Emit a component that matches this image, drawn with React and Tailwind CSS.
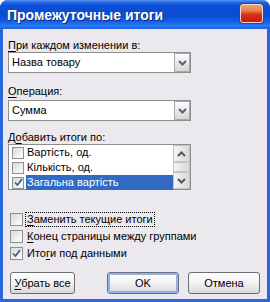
import React from 'react';

const Key = ({ children }) => <span className="underline underline-offset-[2px] decoration-1">{children}</span>;

const Check = () => (
  <svg width="9" height="9" viewBox="0 0 9 9" className="block">
    <path d="M1 4.5 L3.5 7 L8 1" fill="none" stroke="#3d5a94" strokeWidth="1.7" />
  </svg>
);

const Box = ({ checked, small }) => (
  <div
    className={`${small ? 'w-[12px] h-[12px]' : 'w-[13px] h-[13px]'} shrink-0 border border-[#8f8f8f] bg-gradient-to-br from-[#d9d9d9] to-white flex items-center justify-center`}
  >
    {checked && <Check />}
  </div>
);

const Chevron = ({ up, color = '#4d6185' }) => (
  <svg width="9" height="6" viewBox="0 0 9 6" className="block">
    <path d={up ? 'M1 5 L4.5 1.5 L8 5' : 'M1 1 L4.5 4.5 L8 1'} fill="none" stroke={color} strokeWidth="2" />
  </svg>
);

const Combo = ({ value }) => (
  <div className="w-[183px] h-[21px] border border-[#8e8e8e] bg-white flex items-center">
    <span className="flex-1 pl-[3px] leading-[13px]">{value}</span>
    <div className="w-[16px] h-[19px] border border-[#a8a8a8] bg-gradient-to-b from-white to-[#d6d6d6] flex items-center justify-center">
      <Chevron />
    </div>
  </div>
);

const rows = [
  { label: 'Вартість, од.', checked: false },
  { label: 'Кількість, од.', checked: false },
  { label: 'Загальна вартість', checked: true, selected: true },
];

const Button = ({ children, primary, className = '' }) => (
  <div
    className={`h-[22px] rounded-[3px] border border-[#6e6e6e] bg-gradient-to-b from-white via-[#f2f2f2] to-[#d8d8d8] flex items-center justify-center ${className}`}
  >
    <div
      className={`w-full h-full rounded-[2px] flex items-center justify-center ${primary ? 'border-2 border-[#8fb1ec]' : ''}`}
    >
      {children}
    </div>
  </div>
);

export default function App() {
  return (
    <div className="w-[270px] h-[302px] bg-white font-['Liberation_Sans',Arial,sans-serif] text-[11px] text-black">
      <div className="w-full h-full rounded-t-[8px] overflow-hidden flex flex-col bg-[#2c66dd]">
        {/* Title bar */}
        <div className="h-[29px] shrink-0 flex items-center pl-[7px] pr-[7px] bg-[linear-gradient(to_bottom,#5b95f0_0%,#2567e6_8%,#0a4ed6_20%,#0a4dd4_55%,#1560e6_75%,#2a7af2_88%,#1d62e2_100%)]">
          <span className="flex-1 text-white font-bold text-[14px] leading-[16px] [text-shadow:1px_1px_0_#0a2a80]">
            Промежуточные итоги
          </span>
          <div className="w-[23px] h-[19px] -mt-[2px] rounded-[3px] border border-[#f0d8d0] bg-[linear-gradient(to_bottom,#f0a070_0%,#e8804a_35%,#d8301a_55%,#cc1a08_100%)] shadow-[0_0_0_1px_#6b3a2a]" />
        </div>

        {/* Client area */}
        <div className="flex-1 mx-[3px] mb-[3px] bg-[#ebe9ed] flex flex-col pt-[10px]">
          <div className="pl-[5px]">
            <div className="h-[13px] leading-[13px]">
              <Key>П</Key>ри каждом изменении в:
            </div>
            <Combo value="Назва товару" />

            <div className="h-[13px] leading-[13px] mt-[12px]">
              <Key>О</Key>перация:
            </div>
            <div className="mt-[2px]">
              <Combo value="Сумма" />
            </div>

            <div className="h-[13px] leading-[13px] mt-[10px]">
              Д<Key>о</Key>бавить итоги по:
            </div>
            <div className="w-[183px] h-[46px] border border-[#8e8e8e] bg-white flex">
              <div className="flex-1 flex flex-col">
                {rows.map((r) => (
                  <div key={r.label} className="h-[15px] flex items-center pl-[3px]">
                    <Box checked={r.checked} small />
                    <span
                      className={`ml-[2px] pl-[1px] pr-[1px] h-[15px] leading-[15px] ${r.selected ? 'flex-1 bg-[#316ac5] text-white' : ''}`}
                    >
                      {r.label}
                    </span>
                  </div>
                ))}
              </div>
              <div className="w-[17px] flex flex-col">
                <div className="h-[17px] border border-[#c4c4c4] bg-gradient-to-r from-[#f4f4f4] to-[#d8d8d8] flex items-center justify-center">
                  <Chevron up color="#555" />
                </div>
                <div className="flex-1 border border-[#c4c4c4] bg-gradient-to-r from-[#f4f4f4] to-[#d8d8d8]" />
                <div className="h-[17px] border border-[#c4c4c4] bg-gradient-to-r from-[#f4f4f4] to-[#d8d8d8] flex items-center justify-center">
                  <Chevron color="#555" />
                </div>
              </div>
            </div>
          </div>

          {/* Options */}
          <div className="mt-[21px] pl-[7px] flex flex-col">
            <div className="h-[17px] flex items-center">
              <Box />
              <span className="ml-[2px] px-[1px] leading-[13px] border border-dotted border-black">
                <Key>З</Key>аменить текущие итоги
              </span>
            </div>
            <div className="h-[17px] flex items-center">
              <Box />
              <span className="ml-[3px] px-[1px] leading-[13px]">
                <Key>К</Key>онец страницы между группами
              </span>
            </div>
            <div className="h-[17px] flex items-center">
              <Box checked />
              <span className="ml-[3px] px-[1px] leading-[13px]">
                Ито<Key>г</Key>и под данными
              </span>
            </div>
          </div>

          {/* Buttons */}
          <div className="mt-[10px] flex pl-[7px]">
            <Button className="w-[65px]">
              <span>
                <Key>У</Key>брать все
              </span>
            </Button>
            <Button primary className="w-[72px] ml-[32px]">
              OK
            </Button>
            <Button className="w-[72px] ml-[9px]">Отмена</Button>
          </div>
        </div>
      </div>
    </div>
  );
}
